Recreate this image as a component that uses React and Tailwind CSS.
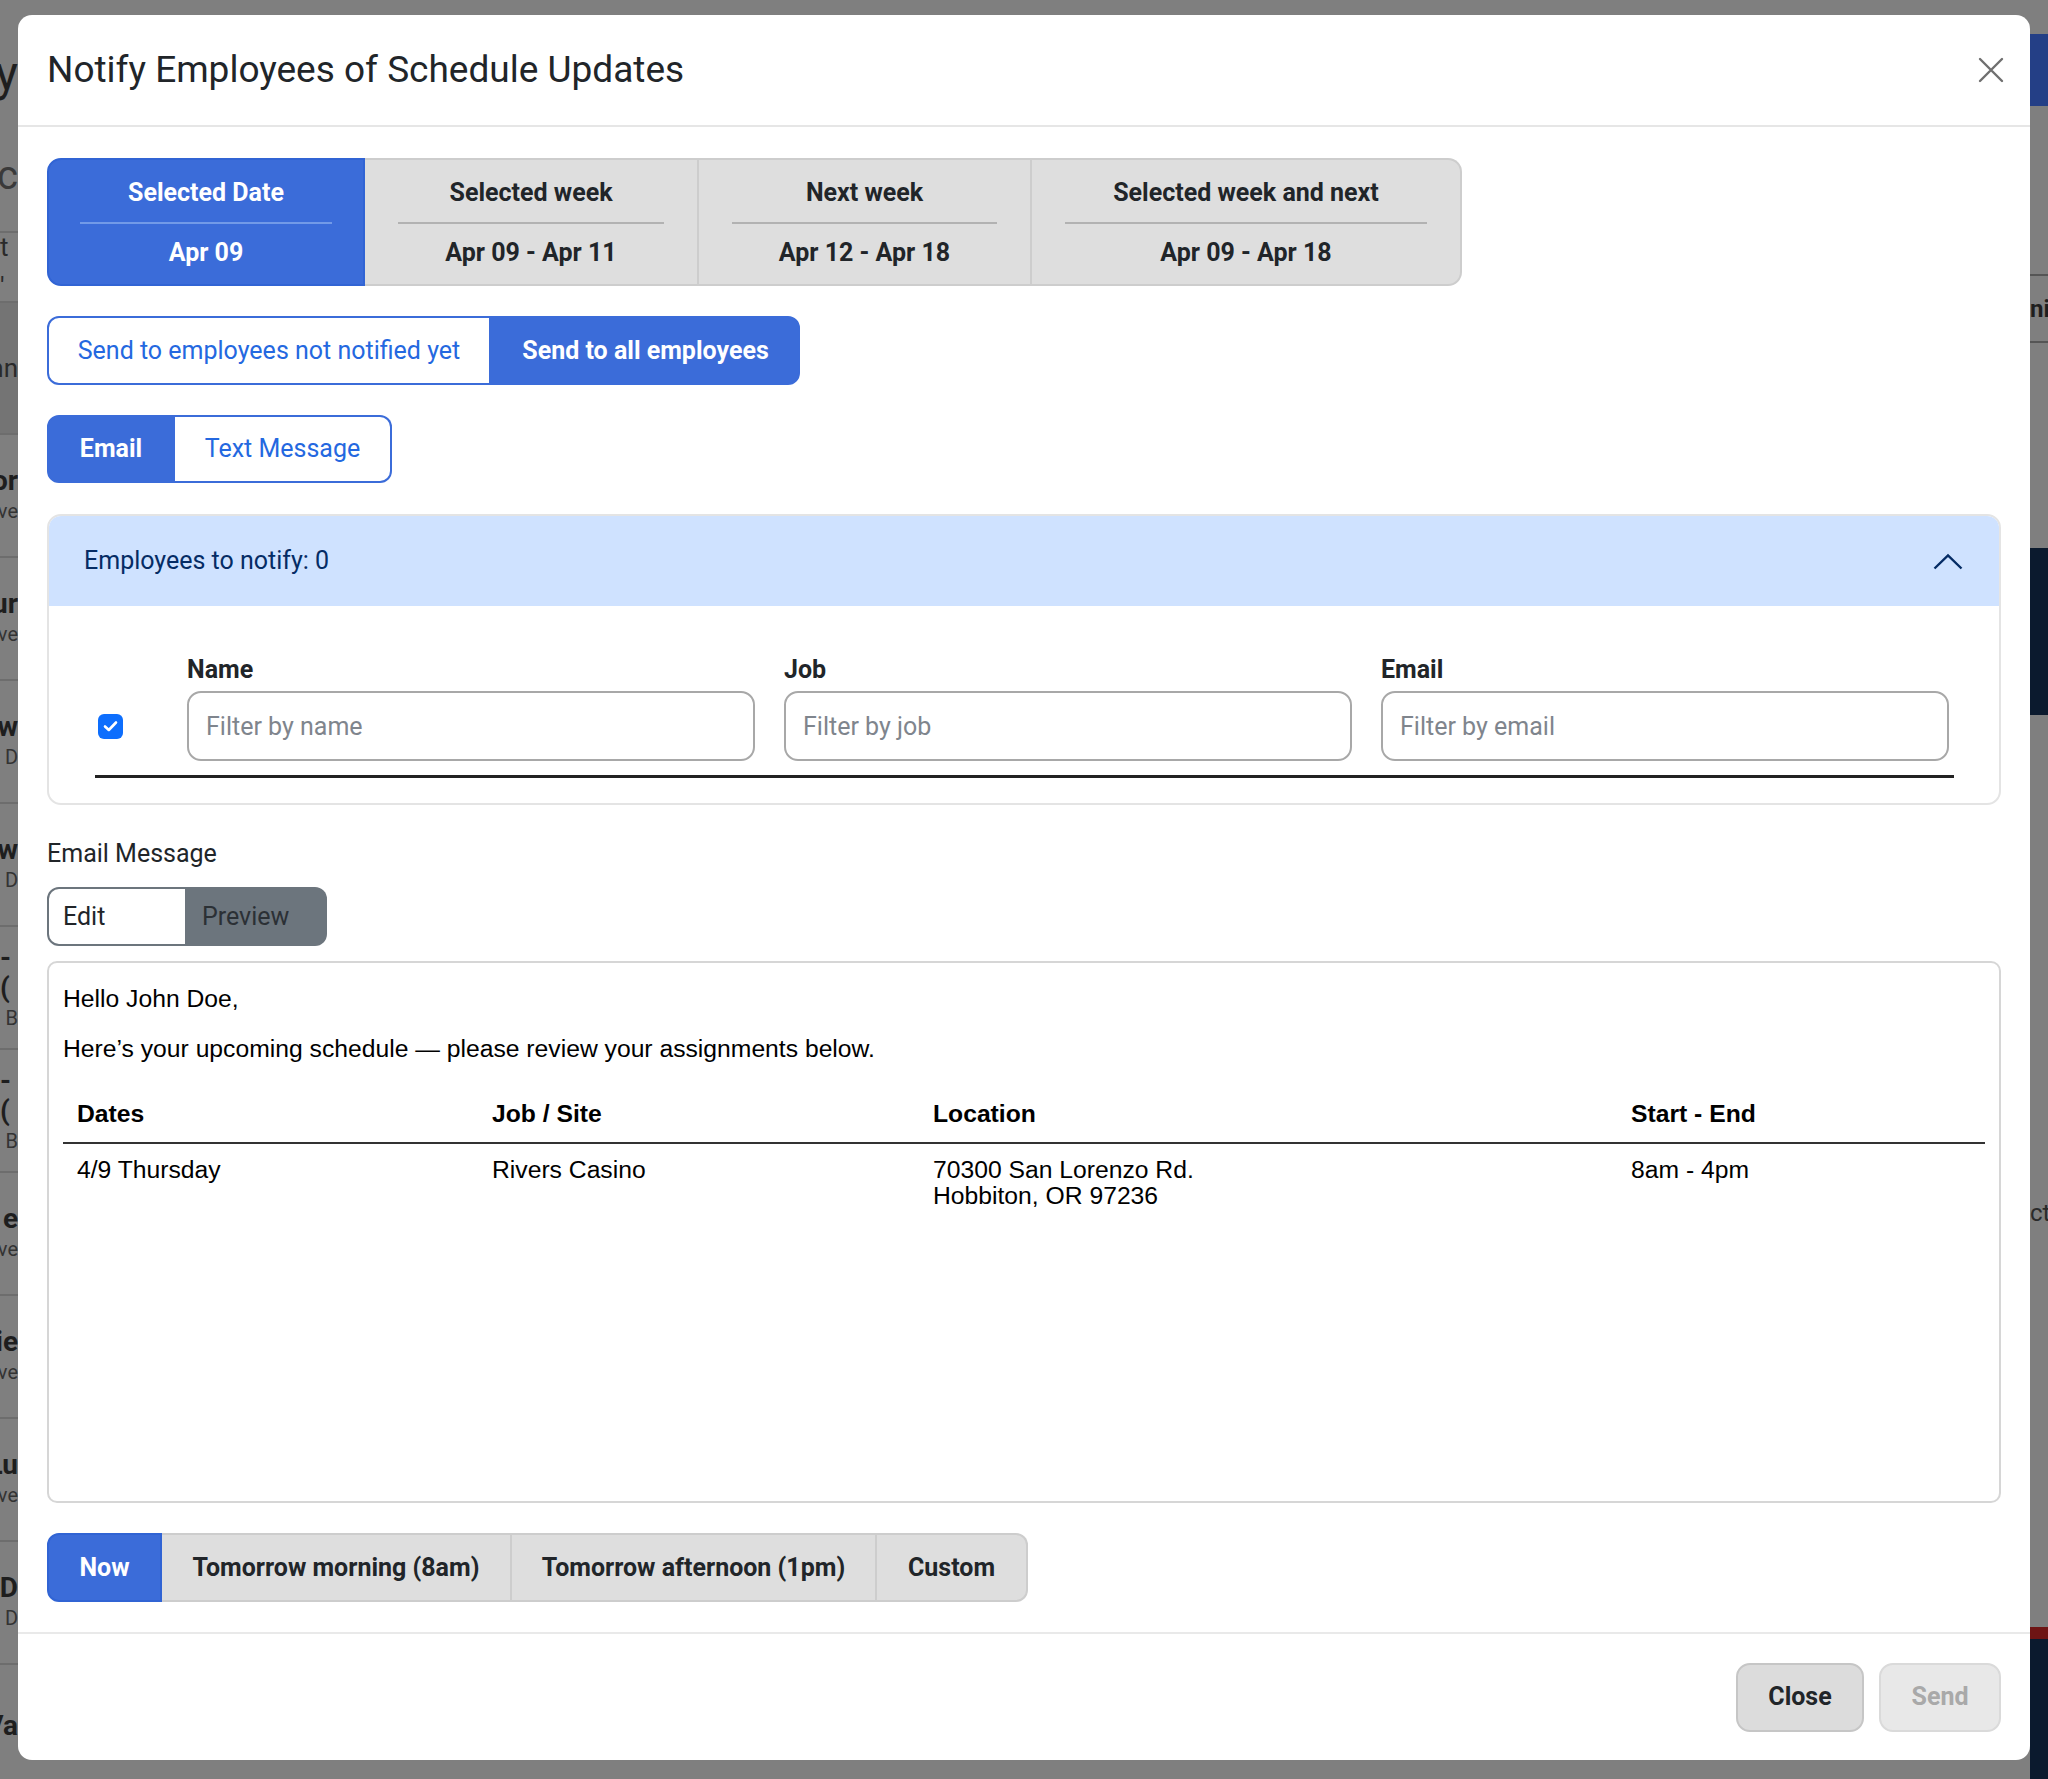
import React from "react";

const ranges = [
  { title: "Selected Date", dates: "Apr 09", w: "w-[318px]", active: true },
  { title: "Selected week", dates: "Apr 09 - Apr 11", w: "w-[334px]" },
  { title: "Next week", dates: "Apr 12 - Apr 18", w: "w-[333px]" },
  { title: "Selected week and next", dates: "Apr 09 - Apr 18", w: "w-[430px]", last: true },
];

const sendTimes = [
  { label: "Now", w: "w-[115px]", active: true },
  { label: "Tomorrow morning (8am)", w: "w-[350px]" },
  { label: "Tomorrow afternoon (1pm)", w: "w-[365px]" },
  { label: "Custom", w: "w-[151px]", last: true },
];

const filters = [
  { label: "Name", placeholder: "Filter by name" },
  { label: "Job", placeholder: "Filter by job" },
  { label: "Email", placeholder: "Filter by email" },
];

// bits of the page that peek out from under the backdrop on the left
const leftRows = [
  { big: "or", small: "ve" },
  { big: "ur", small: "ve" },
  { big: "ow", small: "D" },
  { big: "ow", small: "D" },
  { big: "- (", small: "B" },
  { big: "- (", small: "B" },
  { big: "e", small: "ve" },
  { big: "ie", small: "ve" },
  { big: "Lu", small: "ve" },
  { big: "D", small: "D" },
  { big: "Va", small: "" },
];

function DateRangeTabs() {
  return (
    <div className="flex h-[128px]">
      {ranges.map((r) => (
        <div
          key={r.title}
          className={
            r.active
              ? `${r.w} flex flex-col items-stretch rounded-l-[14px] border-2 border-[#3164d4] bg-[#3b6cd9] px-[31px] pt-[16px] text-white`
              : `${r.w} flex flex-col items-stretch border-y-2 border-r-2 border-[#cdcdcd] bg-[#dedede] px-[33px] pt-[16px] text-[#212529] ${r.last ? "rounded-r-[14px]" : ""}`
          }
        >
          <div className="text-center text-[25px] font-bold leading-[34px]">{r.title}</div>
          <div className={r.active ? "my-[12px] h-[2px] bg-[#729ae8]" : "my-[12px] h-[2px] bg-[#b2b2b2]"} />
          <div className="text-center text-[25px] font-bold leading-[34px]">{r.dates}</div>
        </div>
      ))}
    </div>
  );
}

function Segmented({ left, right, leftW, rightW, h }) {
  return (
    <div className={`flex ${h}`}>
      <button className={`${leftW} flex items-center justify-center rounded-l-[12px] border-2 border-[#3b6cd9] bg-white text-[25px] text-[#2468e0]`}>
        {left}
      </button>
      <button className={`${rightW} flex items-center justify-center rounded-r-[12px] border-2 border-[#3b6cd9] bg-[#3b6cd9] text-[25px] font-bold text-white`}>
        {right}
      </button>
    </div>
  );
}

function SegmentedActiveFirst({ left, right, leftW, rightW, h }) {
  return (
    <div className={`flex ${h}`}>
      <button className={`${leftW} flex items-center justify-center rounded-l-[12px] border-2 border-[#3b6cd9] bg-[#3b6cd9] text-[25px] font-bold text-white`}>
        {left}
      </button>
      <button className={`${rightW} flex items-center justify-center rounded-r-[12px] border-2 border-l-0 border-[#3b6cd9] bg-white text-[25px] text-[#2468e0]`}>
        {right}
      </button>
    </div>
  );
}

function EmployeesAccordion() {
  return (
    <div className="mt-[31px] overflow-hidden rounded-[14px] border-2 border-[#e4e4e4]">
      <div className="flex h-[90px] items-center justify-between bg-[#cfe2ff] pl-[35px] pr-[36px] text-[25px] text-[#052c65]">
        <span>Employees to notify: 0</span>
        <svg width="30" height="17" viewBox="0 0 30 17" fill="none">
          <polyline points="1.5,15.5 15,2.5 28.5,15.5" stroke="#052c65" strokeWidth="2.4" />
        </svg>
      </div>
      <div className="pl-[46px] pr-[45px] pt-[45px] pb-[25px]">
        <div className="flex items-end border-b-[3px] border-[#222] pb-[14px]">
          <div className="flex h-[70px] w-[92px] items-center pl-[3px]">
            <div className="flex h-[25px] w-[25px] items-center justify-center rounded-[6px] bg-[#0d6efd]">
              <svg width="15" height="12" viewBox="0 0 15 12" fill="none">
                <polyline points="2,6.5 5.8,10 13,2.5" stroke="white" strokeWidth="2.6" strokeLinecap="round" strokeLinejoin="round" />
              </svg>
            </div>
          </div>
          <div className="flex gap-x-[29px]">
            {filters.map((f) => (
              <div key={f.label} className="w-[568px]">
                <div className="mb-[2px] text-[25px] font-bold leading-[38px] text-[#212529]">{f.label}</div>
                <input
                  readOnly
                  placeholder={f.placeholder}
                  className="h-[70px] w-full rounded-[14px] border-2 border-[#a8a8a8] bg-white px-[17px] text-[25px] outline-none placeholder:text-[#7f858d]"
                />
              </div>
            ))}
          </div>
        </div>
      </div>
    </div>
  );
}

function EmailPreview() {
  return (
    <div className="mt-[15px] h-[542px] rounded-[10px] border-2 border-[#d6d6d6] px-[14px] pt-[21px] font-['Liberation_Sans',Arial,sans-serif] text-[24.7px] text-black">
      <p className="leading-[30px]">Hello John Doe,</p>
      <p className="mt-[20px] leading-[30px]">Here’s your upcoming schedule — please review your assignments below.</p>
      <div className="mt-[35px]">
        <div className="grid grid-cols-[415px_441px_698px_1fr] border-b-2 border-[#333] pb-[13px] font-bold leading-[30px]">
          <div className="px-[14px]">Dates</div>
          <div className="px-[14px]">Job / Site</div>
          <div className="px-[14px]">Location</div>
          <div className="px-[14px]">Start - End</div>
        </div>
        <div className="grid grid-cols-[415px_441px_698px_1fr] pt-[13px] leading-[26px]">
          <div className="px-[14px]">4/9 Thursday</div>
          <div className="px-[14px]">Rivers Casino</div>
          <div className="px-[14px]">
            70300 San Lorenzo Rd.
            <br />
            Hobbiton, OR 97236
          </div>
          <div className="px-[14px]">8am - 4pm</div>
        </div>
      </div>
    </div>
  );
}

function SendTimeTabs() {
  return (
    <div className="mt-[30px] flex h-[69px]">
      {sendTimes.map((t) => (
        <button
          key={t.label}
          className={
            t.active
              ? `${t.w} flex items-center justify-center rounded-l-[12px] border-2 border-[#3164d4] bg-[#3b6cd9] text-[25px] font-bold text-white`
              : `${t.w} flex items-center justify-center border-y-2 border-r-2 border-[#cdcdcd] bg-[#dedede] text-[25px] font-bold text-[#212529] ${t.last ? "rounded-r-[12px]" : ""}`
          }
        >
          {t.label}
        </button>
      ))}
    </div>
  );
}

function Backdrop() {
  return (
    <div className="flex h-full flex-col">
      <div className="flex flex-1">
        <div className="flex w-[18px] flex-col overflow-hidden">
          <div className="flex h-[120px] items-end justify-end pb-[22px] text-[48px] leading-none text-[#1e1e1e]">y</div>
          <div className="flex h-[113px] items-center justify-end border-b-2 border-[#6d6d6d] text-[40px] text-[#3a3a3a]">rc</div>
          <div className="flex h-[70px] items-center justify-end border-b-2 border-[#6d6d6d] text-[26px] text-[#2a2a2a]">t '</div>
          <div className="flex h-[130px] items-center justify-end bg-[#747474] text-[26px] text-[#2a2a2a]">nn</div>
          {leftRows.map((r, i) => (
            <div key={i} className="flex h-[123px] flex-col items-end justify-center border-t-2 border-[#6d6d6d] leading-[30px]">
              <span className="text-[28px] font-bold text-[#1e1e1e]">{r.big}</span>
              <span className="text-[20px] text-[#333]">{r.small}</span>
            </div>
          ))}
        </div>
        <div className="flex-1" />
        <div className="flex w-[18px] flex-col">
          <div className="mt-[34px] h-[72px] bg-[#243f86]" />
          <div className="mt-[168px] flex h-[69px] items-center border-y-2 border-[#555] text-[24px] font-bold text-[#1e1e1e]">
            nit
          </div>
          <div className="mt-[205px] h-[167px] bg-[#0b1a2e]" />
          <div className="mt-[480px] text-[24px] text-[#2a2a2a]">ct</div>
          <div className="flex-1" />
          <div className="h-[12px] bg-[#6e1414]" />
          <div className="h-[147px] bg-[#0b1a2e]" />
        </div>
      </div>
      <div className="flex h-[19px]">
        <div className="flex-1 text-[22px] leading-[24px] text-[#2a2a2a]">yee - Journeyman</div>
        <div className="w-[540px] bg-[#0b1a2e]" />
      </div>
    </div>
  );
}

export default function App() {
  return (
    <div className="relative h-[1779px] w-[2048px] overflow-hidden bg-[#7f7f7f] font-['Roboto','Liberation_Sans',sans-serif]">
      <Backdrop />

      <div className="absolute left-[18px] top-[15px] flex h-[1745px] w-[2012px] flex-col rounded-[14px] bg-white">
        <div className="flex h-[112px] items-center justify-between border-b-2 border-[#e6e6e6] pl-[29px] pr-[26px]">
          <h1 className="text-[37px] font-normal text-[#212529]">Notify Employees of Schedule Updates</h1>
          <svg width="26" height="26" viewBox="0 0 26 26" fill="none">
            <path d="M2 2 L24 24 M24 2 L2 24" stroke="#6f6f6f" strokeWidth="2.4" strokeLinecap="round" />
          </svg>
        </div>

        <div className="px-[29px] pt-[31px] pb-[30px]">
          <DateRangeTabs />
          <div className="mt-[30px]">
            <Segmented left="Send to employees not notified yet" right="Send to all employees" leftW="w-[444px]" rightW="w-[309px]" h="h-[69px]" />
          </div>
          <div className="mt-[30px]">
            <SegmentedActiveFirst left="Email" right="Text Message" leftW="w-[128px]" rightW="w-[217px]" h="h-[68px]" />
          </div>

          <EmployeesAccordion />

          <div className="mt-[30px] text-[25px] leading-[37px] text-[#212529]">Email Message</div>
          <div className="mt-[15px] flex h-[59px]">
            <button className="flex w-[140px] items-center rounded-l-[12px] border-2 border-[#6c757d] pl-[14px] text-[25px] text-[#212529]">
              Edit
            </button>
            <button className="flex w-[140px] items-center rounded-r-[12px] bg-[#6c757d] pl-[15px] text-[25px] text-[#2b3035]">
              Preview
            </button>
          </div>

          <EmailPreview />
          <SendTimeTabs />
        </div>

        <div className="flex flex-1 items-center justify-end gap-[15px] border-t-2 border-[#e9e9e9] pr-[29px]">
          <button className="h-[69px] w-[128px] rounded-[14px] border-2 border-[#c6c6c6] bg-[#dcdcdc] text-[25px] font-bold text-[#212529]">
            Close
          </button>
          <button className="h-[69px] w-[122px] rounded-[14px] border-2 border-[#dadada] bg-[#e8e8e8] text-[25px] font-bold text-[#a9a9a9]">
            Send
          </button>
        </div>
      </div>
    </div>
  );
}
